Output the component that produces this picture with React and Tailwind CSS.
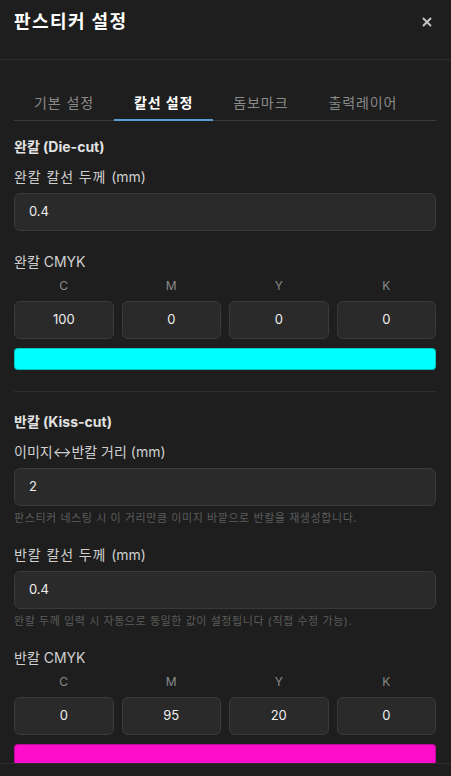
import { X } from 'lucide-react';

const FONT = { fontFamily: 'Inter, "Noto Sans CJK KR", sans-serif' };

const CmykRow = ({ values, color }) => (
  <div>
    <div className="grid grid-cols-4 gap-2 mt-[6px]">
      {['C', 'M', 'Y', 'K'].map((k) => (
        <div key={k} className="text-center text-[12px] leading-4 text-[#8a8a8a]">{k}</div>
      ))}
    </div>
    <div className="grid grid-cols-4 gap-2 mt-[7px]">
      {values.map((v, i) => (
        <div
          key={i}
          className="h-[38px] flex items-center justify-center rounded-[6px] bg-[#2a2a2a] border border-[#3a3a3a] text-[13px] text-[#eeeeee]"
        >
          {v}
        </div>
      ))}
    </div>
    <div className={`mt-[9px] h-[22px] rounded-[4px] border border-black/25 ${color}`}></div>
  </div>
);

const Field = ({ label, value, hint }) => (
  <div>
    <div className="text-[14px] leading-5 text-[#d0d0d0]">{label}</div>
    <div className="mt-[6px] h-[38px] flex items-center px-[14px] rounded-[6px] bg-[#2a2a2a] border border-[#3a3a3a] text-[13px] text-[#eeeeee]">
      {value}
    </div>
    {hint && <div className="mt-[4px] text-[11px] leading-4 tracking-[0.57px] text-[#5c5c5c]">{hint}</div>}
  </div>
);

export default function App() {
  const tabs = ['기본 설정', '칼선 설정', '돔보마크', '출력레이어'];
  return (
    <div className="h-[776px] w-[451px] overflow-hidden flex flex-col bg-[#1e1e1e]" style={FONT}>
      {/* Header */}
      <div className="h-[60px] shrink-0 flex items-start justify-between pl-[14px] pr-[17px] pt-[10px] border-b border-[#2c2c2c]">
        <h1 className="text-[18px] leading-6 font-bold tracking-[1.4px] text-white">판스티커 설정</h1>
        <button className="mt-[5px] text-[#c4c4c4]">
          <X size={14} strokeWidth={3.2} />
        </button>
      </div>

      {/* Body */}
      <div className="flex-1 min-h-0 overflow-hidden pl-[14px] pr-[15px] pt-[25px]">
        <div className="flex border-b border-[#3a3a3a]">
          {tabs.map((t, i) => (
            <button
              key={t}
              className={`px-5 pt-[8px] pb-[6px] -mb-px border-b-2 text-[14px] leading-5 tracking-[0.9px] ${
                i === 1 ? 'border-[#5a9bd5] text-white font-bold' : 'border-transparent text-[#8a8a8a]'
              }`}
            >
              {t}
            </button>
          ))}
        </div>

        <div className="mt-[16px] text-[14px] leading-5 font-bold text-[#e2e2e2]">완칼 (Die-cut)</div>
        <div className="mt-[10px]">
          <Field label={<><span className="tracking-[0.9px]">완칼 칼선 두께 </span>(mm)</>} value="0.4" />
        </div>
        <div className="mt-[21px] text-[14px] leading-5 text-[#d0d0d0]">완칼 CMYK</div>
        <CmykRow values={['100', '0', '0', '0']} color="bg-[#00ffff]" />

        <div className="mt-[21px] border-t border-[#2e2e2e]"></div>

        <div className="mt-[20px] text-[14px] leading-5 font-bold text-[#e2e2e2]">반칼 (Kiss-cut)</div>
        <div className="mt-[10px]">
          <Field
            label="이미지↔반칼 거리 (mm)"
            value="2"
            hint="판스티커 네스팅 시 이 거리만큼 이미지 바깥으로 반칼을 재생성합니다."
          />
        </div>
        <div className="mt-[19px]">
          <Field
            label={<><span className="tracking-[0.9px]">반칼 칼선 두께 </span>(mm)</>}
            value="0.4"
            hint="완칼 두께 입력 시 자동으로 동일한 값이 설정됩니다 (직접 수정 가능)."
          />
        </div>
        <div className="mt-[19px] text-[14px] leading-5 text-[#d0d0d0]">반칼 CMYK</div>
        <CmykRow values={['0', '95', '20', '0']} color="bg-[#ff0dcc]" />
      </div>

      {/* Footer */}
      <div className="h-[13px] shrink-0 border-t border-[#2c2c2c] bg-[#1e1e1e]"></div>
    </div>
  );
}
